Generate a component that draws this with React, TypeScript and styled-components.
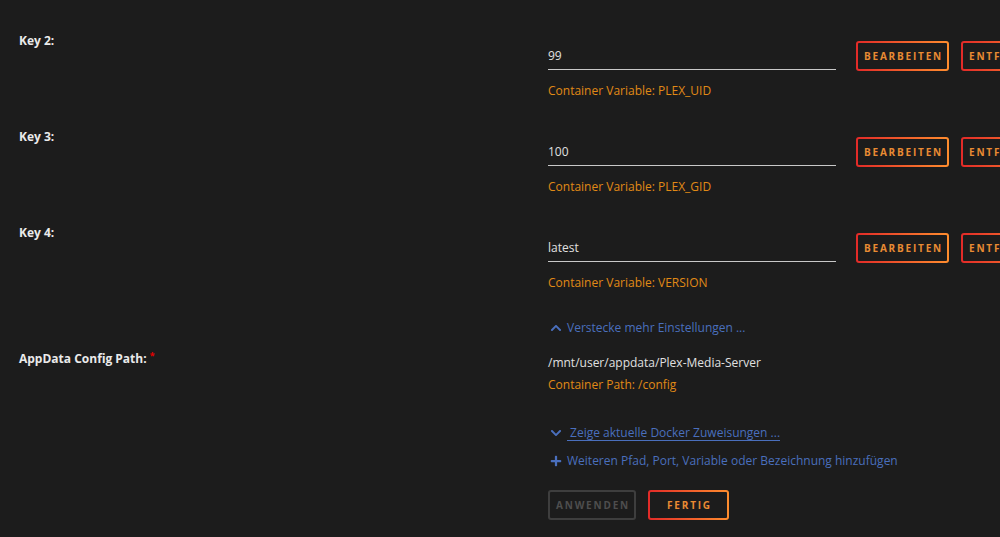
import React from 'react';
import styled, { createGlobalStyle } from 'styled-components';
import { FaChevronUp, FaChevronDown, FaPlus } from 'react-icons/fa';

const GlobalStyle = createGlobalStyle`
  html, body {
    margin: 0;
    padding: 0;
    background: #1c1c1c;
    overflow: hidden;
  }
  body {
    font-family: "Open Sans", "Noto Sans", sans-serif;
    font-size: 12px;
    color: #e0e0e0;
  }
`;

const Page = styled.div`
  width: 1100px;
  padding-top: 26px;
`;

const Row = styled.div<{ $h?: number; $mt?: number }>`
  display: flex;
  height: ${(p) => (p.$h ? `${p.$h}px` : 'auto')};
  margin-top: ${(p) => p.$mt ?? 0}px;
`;

const Label = styled.div`
  width: 548px;
  box-sizing: border-box;
  padding-left: 19px;
  line-height: 30px;
  font-weight: 700;
  color: #eaeaea;
  flex-shrink: 0;
`;

const Required = styled.sup`
  color: #e60000;
  font-size: 9px;
  margin-left: 3px;
  vertical-align: 4px;
  line-height: 0;
`;

const Field = styled.div`
  display: flex;
  flex-direction: column;
`;

const InputLine = styled.div`
  display: flex;
  align-items: flex-start;
  margin-top: 15px;
`;

const Input = styled.div`
  width: 288px;
  height: 28px;
  line-height: 30px;
  border-bottom: 1px solid #c8c8c8;
  color: #e0e0e0;
  margin-right: 20px;
`;

const Button = styled.button<{ $disabled?: boolean }>`
  box-sizing: border-box;
  height: 30px;
  min-width: 81px;
  padding: 0 4px 0 6px;
  margin-right: 12px;
  border: 2px solid transparent;
  border-radius: 3px;
  background: ${(p) =>
    p.$disabled
      ? 'linear-gradient(#1c1c1c, #1c1c1c) padding-box, linear-gradient(#3e3e3e, #3e3e3e) border-box'
      : 'linear-gradient(#1c1c1c, #1c1c1c) padding-box, linear-gradient(90deg, #e22a28, #ff8d2e) border-box'};
  color: ${(p) => (p.$disabled ? '#4e4e4e' : '#e98b33')};
  font-family: "Open Sans", "Noto Sans", sans-serif;
  font-size: 10px;
  font-weight: 700;
  letter-spacing: 1.8px;
  white-space: nowrap;
  flex-shrink: 0;
`;

const Hint = styled.div`
  color: #e08a16;
  line-height: 20px;
  margin-top: 10px;
`;

const Indented = styled.div`
  margin-left: 548px;
  display: flex;
  flex-direction: column;
`;

const LinkLine = styled.div<{ $mt: number }>`
  display: flex;
  align-items: center;
  line-height: 20px;
  margin-top: ${(p) => p.$mt}px;
  color: #4a6fbd;
  svg {
    width: 12px;
    height: 12px;
    margin: 0 5px 0 2px;
    flex-shrink: 0;
  }
`;

const Underlined = styled.span`
  border-bottom: 1px solid #4a6fbd;
  line-height: 15px;
  white-space: pre;
`;

const PathText = styled.div`
  line-height: 22px;
  margin-top: 8px;
  color: #e0e0e0;
`;

const PathHint = styled.div`
  line-height: 22px;
  color: #e08a16;
`;

const ActionBar = styled.div`
  display: flex;
  margin-top: 19px;
`;

const keys = [
  { label: 'Key 2:', value: '99', hint: 'Container Variable: PLEX_UID' },
  { label: 'Key 3:', value: '100', hint: 'Container Variable: PLEX_GID' },
  { label: 'Key 4:', value: 'latest', hint: 'Container Variable: VERSION' },
];

export default function App() {
  return (
    <>
      <GlobalStyle />
      <Page>
        {keys.map((k) => (
          <Row key={k.label} $h={96}>
            <Label>{k.label}</Label>
            <Field>
              <InputLine>
                <Input>{k.value}</Input>
                <Button>BEARBEITEN</Button>
                <Button>ENTFERNEN</Button>
              </InputLine>
              <Hint>{k.hint}</Hint>
            </Field>
          </Row>
        ))}
        <Indented>
          <LinkLine $mt={4}>
            <FaChevronUp />
            Verstecke mehr Einstellungen ...
          </LinkLine>
        </Indented>
        <Row $mt={6}>
          <Label>
            AppData Config Path:<Required>*</Required>
          </Label>
          <Field>
            <PathText>/mnt/user/appdata/Plex-Media-Server</PathText>
            <PathHint>Container Path: /config</PathHint>
          </Field>
        </Row>
        <Indented>
          <LinkLine $mt={29}>
            <FaChevronDown />
            <Underlined> Zeige aktuelle Docker Zuweisungen ...</Underlined>
          </LinkLine>
          <LinkLine $mt={10}>
            <FaPlus />
            Weiteren Pfad, Port, Variable oder Bezeichnung hinzufügen
          </LinkLine>
          <ActionBar>
            <Button $disabled>ANWENDEN</Button>
            <Button>FERTIG</Button>
          </ActionBar>
        </Indented>
      </Page>
    </>
  );
}
